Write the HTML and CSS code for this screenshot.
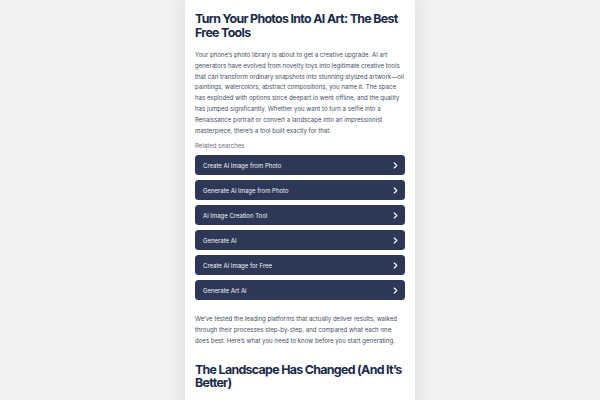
FILE: index.html
```html
<!DOCTYPE html>
<html lang="en">
<head>
<meta charset="utf-8">
<title>Turn Your Photos Into AI Art</title>
<link rel="stylesheet" href="styles.css">
</head>
<body>
<main class="page">
  <h1 class="title">Turn Your Photos Into AI Art: The Best Free Tools</h1>
  <p class="text intro">Your phone’s photo library is about to get a creative upgrade. AI art generators have evolved from novelty toys into legitimate creative tools that can transform ordinary snapshots into stunning stylized artwork—oil paintings, watercolors, abstract compositions, you name it. The space has exploded with options since deepart.io went offline, and the quality has jumped significantly. Whether you want to turn a selfie into a Renaissance portrait or convert a landscape into an impressionist masterpiece, there’s a tool built exactly for that.</p>
  <div class="related">
    <div class="related-label">Related searches</div>
    <ul class="related-list">
      <li class="chip"><span>Create Ai Image from Photo</span><svg class="chev" viewBox="0 0 6 8"><path d="M1.5 1 L4.5 4 L1.5 7"/></svg></li>
      <li class="chip"><span>Generate Ai Image from Photo</span><svg class="chev" viewBox="0 0 6 8"><path d="M1.5 1 L4.5 4 L1.5 7"/></svg></li>
      <li class="chip"><span>Ai Image Creation Tool</span><svg class="chev" viewBox="0 0 6 8"><path d="M1.5 1 L4.5 4 L1.5 7"/></svg></li>
      <li class="chip"><span>Generate Ai</span><svg class="chev" viewBox="0 0 6 8"><path d="M1.5 1 L4.5 4 L1.5 7"/></svg></li>
      <li class="chip"><span>Create Ai Image for Free</span><svg class="chev" viewBox="0 0 6 8"><path d="M1.5 1 L4.5 4 L1.5 7"/></svg></li>
      <li class="chip"><span>Generate Art Ai</span><svg class="chev" viewBox="0 0 6 8"><path d="M1.5 1 L4.5 4 L1.5 7"/></svg></li>
    </ul>
  </div>
  <p class="text outro">We’ve tested the leading platforms that actually deliver results, walked through their processes step-by-step, and compared what each one does best. Here’s what you need to know before you start generating.</p>
  <h2 class="title subtitle">The Landscape Has Changed (And It’s Better)</h2>
</main>
</body>
</html>
```
FILE: styles.css
```css
html, body {
  margin: 0;
  padding: 0;
}
body {
  background: #f2f2f2;
  font-family: Inter, "Noto Sans", sans-serif;
  height: 400px;
  overflow: hidden;
}
.page {
  width: 210px;
  margin: 0 auto;
  background: #ffffff;
  padding: 12px 10px 20px;
  min-height: 400px;
  box-sizing: content-box;
  box-shadow: 0 0 22px rgba(0, 0, 0, 0.10);
}
.title {
  margin: 0;
  font-size: 12.4px;
  line-height: 13.5px;
  font-weight: 700;
  color: #1a2a4a;
  letter-spacing: -0.68px;
}
.text {
  margin: 0;
  font-size: 6.08px;
  line-height: 10.8px;
  color: #3f4d66;
}
.intro {
  margin-top: 11px;
}
.related {
  margin-top: 5px;
}
.related-label {
  font-size: 6.1px;
  line-height: 10px;
  color: #6b6f78;
}
.related-list {
  list-style: none;
  margin: 4px 0 0;
  padding: 0;
  display: flex;
  flex-direction: column;
  gap: 5px;
}
.chip {
  height: 20px;
  background: #2d3757;
  border-radius: 3.5px;
  display: flex;
  align-items: center;
  justify-content: space-between;
  padding: 0 7px 0 8px;
  color: #f2f3f7;
  font-size: 6px;
}
.chev {
  width: 5px;
  height: 7px;
}
.chev path {
  fill: none;
  stroke: #ffffff;
  stroke-width: 1.4;
  stroke-linecap: round;
  stroke-linejoin: round;
}
.outro {
  margin-top: 14px;
}
.subtitle {
  margin-top: 16px;
}
```
